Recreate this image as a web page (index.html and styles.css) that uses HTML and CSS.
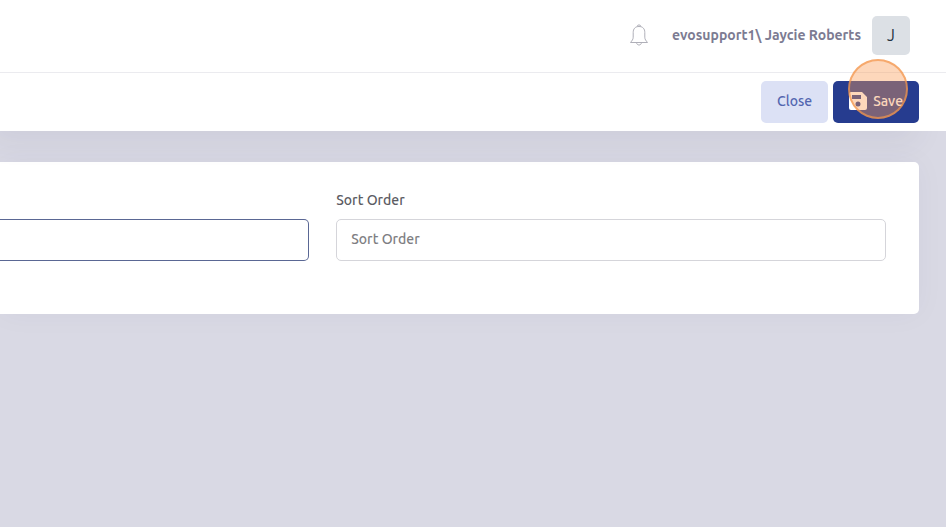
FILE: index.html
```html
<!DOCTYPE html>
<html lang="en">
  <head>
    <meta charset="UTF-8" />
    <meta name="viewport" content="width=device-width, initial-scale=1.0" />
    <title>Sort Order</title>
    <link rel="stylesheet" href="styles.css">
  </head>
  <body>
    <header class="topbar">
      <button type="button" class="bell-btn" aria-label="Notifications">
        <svg class="bell" viewBox="0 0 20 22" fill="none" stroke="currentColor" stroke-linejoin="round">
          <path d="M8.2 2.7a1.8 1.8 0 0 1 3.6 0M10 2.5C6 2.5 4.2 5 4.2 8.5v4.7c0 2.2-1.2 3.4-2.7 5.3h17c-1.5-1.9-2.7-3.1-2.7-5.3V8.5C15.8 5 14 2.5 10 2.5zM7.5 18.7c.3 1.5 1.2 2.3 2.5 2.3s2.2-.8 2.5-2.3" />
        </svg>
      </button>
      <span class="user-name">evosupport1\ Jaycie Roberts</span>
      <button type="button" class="avatar">J</button>
    </header>

    <div class="toolbar">
      <button type="button" class="btn btn-light">Close</button>
      <button type="submit" form="order-form" class="btn btn-primary">
        <svg class="save-icon" viewBox="0 0 18 18" fill="currentColor">
          <path fill-rule="evenodd" d="M2 0h11l5 5v11a2 2 0 0 1-2 2H2a2 2 0 0 1-2-2V2a2 2 0 0 1 2-2zM3 3v4h9V3zM9 9.5a2.5 2.5 0 1 0 0 5 2.5 2.5 0 0 0 0-5z" />
        </svg>
        Save
        <span class="click-marker"></span>
      </button>
    </div>

    <main>
      <form class="card" id="order-form">
        <div class="form-group">
          <input type="text" class="form-control active" aria-label="Name" />
        </div>
        <div class="form-group">
          <label for="sort-order">Sort Order</label>
          <input type="text" class="form-control" id="sort-order" placeholder="Sort Order" />
        </div>
      </form>
    </main>
  </body>
</html>
```

FILE: styles.css
```css
* {
  box-sizing: border-box;
}
body {
  margin: 0;
  min-height: 100vh;
  background-color: #d9d9e4;
  color: #5c5c63;
  font-family: Ubuntu, "Noto Sans", sans-serif;
  font-size: 14px;
  font-weight: 500;
}
button,
input {
  font: inherit;
}
button {
  border: none;
  cursor: pointer;
}
.topbar {
  display: flex;
  align-items: center;
  justify-content: flex-end;
  height: 73px;
  padding: 0 36px 2px 0;
  background-color: #fff;
  border-bottom: 1px solid #ebebef;
}
.bell-btn {
  display: flex;
  margin-right: 23px;
  padding: 0;
  background: none;
  color: #afafb8;
}
.bell {
  width: 20px;
  height: 22px;
}
.user-name {
  margin-right: 11px;
  color: #7c7b92;
  font-weight: 600;
}
.avatar {
  width: 38px;
  height: 39px;
  padding: 0;
  border-radius: 5px;
  background-color: #dce0e5;
  color: #24303f;
  font-size: 16px;
  font-weight: 400;
}
.toolbar {
  position: relative;
  display: flex;
  justify-content: flex-end;
  gap: 5px;
  padding: 8px 27px 8px 0;
  background-color: #fff;
  box-shadow: -20px 20px 30px -10px rgba(60, 60, 100, 0.08);
}
.btn {
  display: flex;
  align-items: center;
  height: 42px;
  padding: 0 16px 2px;
  border-radius: 5px;
}
.btn-light {
  background-color: #dce1f5;
  color: #5366b0;
}
.btn-primary {
  position: relative;
  gap: 6px;
  background-color: #263c8f;
  color: #fff;
}
.save-icon {
  width: 18px;
  height: 18px;
}
/* round highlight over the save button */
.click-marker {
  position: absolute;
  top: -22px;
  right: 11px;
  width: 60px;
  height: 60px;
  border: 2px solid rgba(242, 150, 75, 0.7);
  border-radius: 50%;
  background-color: rgba(249, 155, 85, 0.4);
  pointer-events: none;
}
.card {
  display: grid;
  grid-template-columns: minmax(0, 9fr) minmax(0, 16fr);
  align-items: end;
  gap: 27px;
  margin: 31px 27px 0 0;
  padding: 28px 33px 53px 0;
  background-color: #fff;
  border-radius: 0 5px 5px 0;
  box-shadow: 0 0 30px rgba(60, 60, 100, 0.04);
}
.form-group label {
  display: block;
  margin-bottom: 9px;
  line-height: 20px;
}
.form-control {
  display: block;
  width: 100%;
  height: 42px;
  padding: 0 14px 2px;
  border: 1px solid #d5d5da;
  border-radius: 5px;
  background-color: #fff;
  color: #54545c;
  outline: none;
}
.form-control::placeholder {
  color: #7e7e82;
}
.form-control.active {
  border-color: #5a6794;
  border-left: none;
  border-radius: 0 5px 5px 0;
}
```
